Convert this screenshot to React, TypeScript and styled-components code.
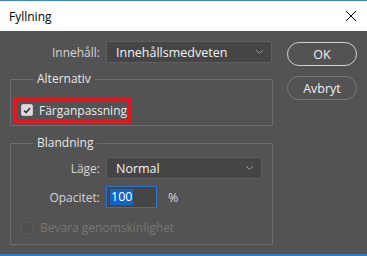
import styled, { createGlobalStyle } from 'styled-components';

const Global = createGlobalStyle`
  html, body {
    margin: 0;
    padding: 0;
    background: #535353;
  }
  * {
    box-sizing: border-box;
  }
`;

const Window = styled.div`
  width: 367px;
  height: 256px;
  display: flex;
  flex-direction: column;
  background: #535353;
  border-top: 1px solid #3c86c4;
  border-bottom: 2px solid #2f7bbd;
  font-family: 'Open Sans', 'Noto Sans', sans-serif;
  font-size: 12px;
  color: #e6e6e6;
  overflow: hidden;
`;

const TitleBar = styled.div`
  height: 30px;
  flex-shrink: 0;
  display: flex;
  align-items: center;
  justify-content: space-between;
  background: #fff;
  color: #000;
  padding: 0 10px 0 9px;
  font-size: 12px;
`;

const Body = styled.div`
  display: flex;
  padding: 10px 10px 0 10px;
  gap: 14px;
`;

const LeftCol = styled.div`
  width: 263px;
  display: flex;
  flex-direction: column;
`;

const RightCol = styled.div`
  display: flex;
  flex-direction: column;
  gap: 10px;
  padding-top: 1px;
`;

const Row = styled.div<{ $mt?: number }>`
  display: flex;
  align-items: center;
  height: 22px;
  margin-top: ${p => p.$mt ?? 0}px;
`;

const Label = styled.span<{ $w: number }>`
  width: ${p => p.$w}px;
  text-align: right;
  padding-right: 6px;
  color: #d4d4d4;
  font-size: 12px;
`;

const Select = styled.div<{ $w: number }>`
  width: ${p => p.$w}px;
  height: 22px;
  display: flex;
  align-items: center;
  justify-content: space-between;
  padding: 0 7px 0 9px;
  background: #454545;
  border: 1px solid #5f5f5f;
  border-radius: 2px;
  color: #f2f2f2;
  font-size: 12.5px;
`;

const Group = styled.fieldset<{ $h: number; $mt: number }>`
  margin: ${p => p.$mt}px 0 0 0;
  padding: 0 0 0 10px;
  height: ${p => p.$h}px;
  border: 1px solid #6c6c6c;
  border-radius: 0;
  min-width: 0;
`;

const Legend = styled.legend`
  padding: 0 4px;
  margin-left: 12px;
  color: #e6e6e6;
  font-size: 12px;
  line-height: 14px;
`;

const Highlight = styled.div`
  display: inline-flex;
  align-items: center;
  gap: 6px;
  margin: 11px 0 0 -8px;
  width: 118px;
  height: 26px;
  padding-left: 4px;
  border: 4px solid #e3161f;
  color: #ececec;
  font-size: 12px;
`;

const Check = styled.span<{ $on?: boolean }>`
  width: 12px;
  height: 12px;
  flex-shrink: 0;
  display: inline-flex;
  align-items: center;
  justify-content: center;
  border-radius: 2px;
  background: ${p => (p.$on ? '#dcdcdc' : '#4f4f4f')};
  border: 1px solid ${p => (p.$on ? '#c8c8c8' : '#5a5a5a')};
`;

const Input = styled.div`
  width: 51px;
  height: 22px;
  display: flex;
  align-items: center;
  padding-left: 3px;
  background: #454545;
  border: 1px solid #2a72cf;
  font-size: 12.5px;
`;

const Selected = styled.span`
  background: #1565c9;
  color: #fff;
  padding: 0 1px;
  line-height: 16px;
`;

const Unit = styled.span`
  margin-left: 11px;
  color: #d8d8d8;
  font-size: 12.5px;
`;

const Disabled = styled.div`
  display: flex;
  align-items: center;
  gap: 7px;
  margin-top: 11px;
  color: #767676;
  font-size: 12px;
`;

const Button = styled.button<{ $primary?: boolean }>`
  width: 70px;
  height: 24px;
  border-radius: 12px;
  background: transparent;
  border: 1.5px solid ${p => (p.$primary ? '#d2d2d2' : '#787878')};
  color: #f0f0f0;
  font-family: inherit;
  font-size: 12.5px;
  padding: 0;
`;

const Chevron = () => (
  <svg width="9" height="6" viewBox="0 0 9 6">
    <path d="M1 1l3.5 3.5L8 1" fill="none" stroke="#9a9a9a" strokeWidth="1" />
  </svg>
);

export default function App() {
  return (
    <>
      <Global />
      <Window>
        <TitleBar>
          <span>Fyllning</span>
          <svg width="12" height="12" viewBox="0 0 12 12">
            <path d="M1 1l10 10M11 1L1 11" stroke="#000" strokeWidth="1" />
          </svg>
        </TitleBar>
        <Body>
          <LeftCol>
            <Row>
              <Label $w={96}>Innehåll:</Label>
              <Select $w={166}>
                Innehållsmedveten
                <Chevron />
              </Select>
            </Row>
            <Group $h={54} $mt={9}>
              <Legend>Alternativ</Legend>
              <Highlight>
                <Check $on>
                  <svg width="8" height="7" viewBox="0 0 8 7">
                    <path d="M1 3.5l2 2L7 1" fill="none" stroke="#333" strokeWidth="1.6" />
                  </svg>
                </Check>
                Färganpassning
              </Highlight>
            </Group>
            <Group $h={109} $mt={10}>
              <Legend>Blandning</Legend>
              <Row $mt={7}>
                <Label $w={85}>Läge:</Label>
                <Select $w={156}>
                  Normal
                  <Chevron />
                </Select>
              </Row>
              <Row $mt={7}>
                <Label $w={85}>Opacitet:</Label>
                <Input>
                  <Selected>100</Selected>
                </Input>
                <Unit>%</Unit>
              </Row>
              <Disabled>
                <Check />
                Bevara genomskinlighet
              </Disabled>
            </Group>
          </LeftCol>
          <RightCol>
            <Button $primary>OK</Button>
            <Button>Avbryt</Button>
          </RightCol>
        </Body>
      </Window>
    </>
  );
}
